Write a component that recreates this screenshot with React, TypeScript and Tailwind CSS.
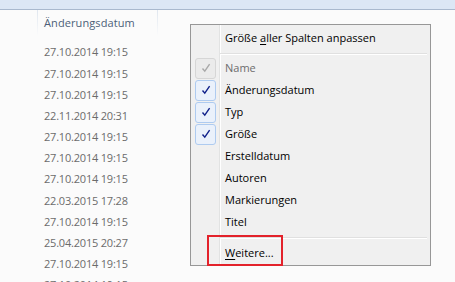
import { ReactNode } from "react";

const dates = [
  "27.10.2014 19:15",
  "27.10.2014 19:15",
  "27.10.2014 19:15",
  "22.11.2014 20:31",
  "27.10.2014 19:15",
  "27.10.2014 19:15",
  "27.10.2014 19:15",
  "22.03.2015 17:28",
  "27.10.2014 19:15",
  "25.04.2015 20:27",
  "27.10.2014 19:15",
  "27.10.2014 19:15",
];

const columns = [
  { label: "Name", state: "disabled" },
  { label: "Änderungsdatum", state: "checked" },
  { label: "Typ", state: "checked" },
  { label: "Größe", state: "checked" },
  { label: "Erstelldatum", state: "none" },
  { label: "Autoren", state: "none" },
  { label: "Markierungen", state: "none" },
  { label: "Titel", state: "none" },
];

const Check = ({ color }: { color: string }) => (
  <svg width="10" height="10" viewBox="0 0 10 10">
    <path d="M1.5 5.5 L3.8 8.2 L8.6 1.2" fill="none" stroke={color} strokeWidth="1.4" />
  </svg>
);

const Row = ({ box, children }: { box?: ReactNode; children: ReactNode }) => (
  <div className="flex h-[22px] items-center">
    <div className="flex w-[28px] items-center justify-center pl-[1px]">{box}</div>
    <div className="pl-[6px]">{children}</div>
  </div>
);

const Separator = ({ last }: { last?: boolean }) => (
  <div className={last ? "ml-[29px] mr-[3px] pb-[3px] pt-[4px]" : "ml-[29px] mr-[3px] pb-[2px] pt-[4px]"}>
    <div className="h-[1px] bg-[#e0e0e0]" />
    <div className="h-[1px] bg-white" />
  </div>
);

export default function App() {
  return (
    <div
      className="relative h-[282px] w-[455px] overflow-hidden bg-[#fbfbfb] text-[11px]"
      style={{ fontFamily: '"Open Sans", "Noto Sans", sans-serif' }}
    >
      {/* top strip */}
      <div className="h-[9px] bg-[#dce7f5]" />
      <div className="h-[1px] bg-[#a9b9ce]" />

      {/* column header */}
      <div className="flex h-[26px]">
        <div className="w-[37px]" />
        <div className="w-[1px] bg-gradient-to-b from-[#dfe6ef] to-transparent" />
        <div className="flex w-[119px] items-center pl-[6px] tracking-[0.1px] text-[#4c5f78]">
          Änderungsdatum
        </div>
        <div className="w-[1px] bg-gradient-to-b from-[#dfe6ef] to-transparent" />
      </div>

      {/* dates */}
      <div className="pl-[44px] pt-[6px] tracking-[-0.2px] text-[#6b6b6b]">
        {dates.map((d, i) => (
          <div key={i} className="flex h-[21.2px] items-center">
            {d}
          </div>
        ))}
      </div>

      {/* context menu */}
      <div className="absolute left-[190px] top-[24px] w-[241px] border border-[#979797] bg-[#f0f0f0] pb-[1px] pt-[2px] text-black">
        <div className="absolute bottom-0 left-[28px] top-0 w-[1px] bg-[#e2e3e3]" />
        <div className="absolute bottom-0 left-[29px] top-0 w-[1px] bg-white" />
        <div className="relative">
          <Row>
            Größe <span className="underline underline-offset-2">a</span>ller Spalten anpassen
          </Row>
          <Separator />
          {columns.map((c) => (
            <Row
              key={c.label}
              box={
                c.state === "disabled" ? (
                  <div className="flex h-[21px] w-[21px] items-center justify-center rounded-[3px] border border-[#d6d6d6] bg-[#ebebeb]">
                    <Check color="#a8a8a8" />
                  </div>
                ) : c.state === "checked" ? (
                  <div className="flex h-[21px] w-[21px] items-center justify-center rounded-[3px] border border-[#aecbf0] bg-[#eaf1fb]">
                    <Check color="#10208a" />
                  </div>
                ) : null
              }
            >
              <span className={c.state === "disabled" ? "text-[#6d6d6d]" : ""}>{c.label}</span>
            </Row>
          ))}
          <Separator last />
          <Row>
            <span className="underline underline-offset-2">W</span>eitere...
          </Row>
        </div>
      </div>

      {/* highlight */}
      <div className="absolute left-[207px] top-[235px] h-[31px] w-[76px] border-2 border-[#e3222b]" />
    </div>
  );
}
